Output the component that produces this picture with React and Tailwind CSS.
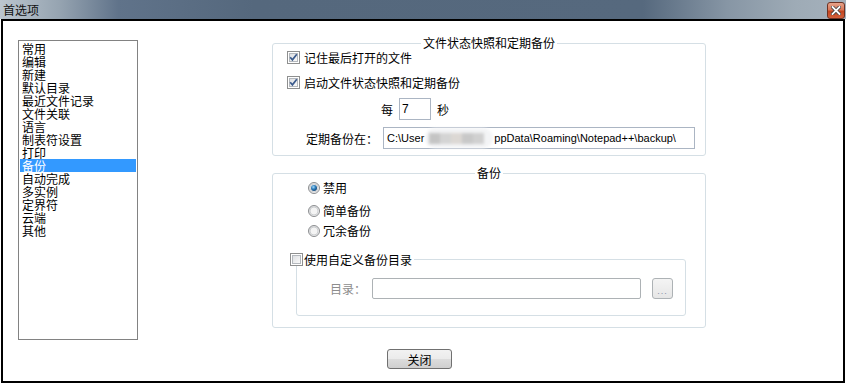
import React from "react";

const FONT = { fontFamily: '"Noto Sans CJK SC", "Noto Sans", sans-serif' };

function Checkbox({ checked }) {
  return (
    <svg width="13" height="13" viewBox="0 0 13 13" className="shrink-0">
      <defs>
        <linearGradient id={checked ? "cbg1" : "cbg0"} x1="0" y1="0" x2="1" y2="1">
          <stop offset="0" stopColor="#dcdee1" />
          <stop offset="1" stopColor="#fbfbfb" />
        </linearGradient>
      </defs>
      <rect x="0.5" y="0.5" width="12" height="12" fill="#fff" stroke="#8e8f8f" />
      <rect x="2.5" y="2.5" width="8" height="8" fill={`url(#${checked ? "cbg1" : "cbg0"})`} stroke="#b4b8bd" />
      {checked && (
        <path d="M3.2 6.3 L5.4 8.8 L9.8 3.2" fill="none" stroke="#3a5a8c" strokeWidth="1.7" />
      )}
    </svg>
  );
}

function Radio({ checked }) {
  return (
    <svg width="12" height="12" viewBox="0 0 12 12" className="shrink-0">
      <defs>
        <linearGradient id="rg" x1="0" y1="0" x2="1" y2="1">
          <stop offset="0" stopColor="#d6d8db" />
          <stop offset="1" stopColor="#fcfcfc" />
        </linearGradient>
        <radialGradient id="rdot" cx="0.4" cy="0.35" r="0.7">
          <stop offset="0" stopColor="#a6dcfb" />
          <stop offset="0.5" stopColor="#2f7dbb" />
          <stop offset="1" stopColor="#0f3f6e" />
        </radialGradient>
      </defs>
      <circle cx="6" cy="6" r="5.5" fill="url(#rg)" stroke="#8c8e90" />
      <circle cx="6" cy="6" r="4" fill="#f4f4f4" stroke="#c4c6c9" strokeWidth="0.8" />
      {checked && <circle cx="6" cy="6" r="3" fill="url(#rdot)" />}
    </svg>
  );
}

const items = [
  "常用",
  "编辑",
  "新建",
  "默认目录",
  "最近文件记录",
  "文件关联",
  "语言",
  "制表符设置",
  "打印",
  "备份",
  "自动完成",
  "多实例",
  "定界符",
  "云端",
  "其他",
];

export default function App() {
  return (
    <div className="w-[846px] h-[384px] bg-white overflow-hidden text-[12px] text-black" style={FONT}>
      {/* title bar */}
      <div className="h-[19px] flex items-center justify-between bg-[linear-gradient(to_right,#bcc6cf_0%,#96a4b1_7%,#60738a_14%,#55687d_30%,#56697e_76%,#8796a5_86%,#9eabb6_94%,#a5b1bc_100%)]">
        <span className="pl-[3px] leading-[13px] text-[12px] text-[#111]">首选项</span>
        <div className="mr-[1px] mt-[1px] w-[18px] h-[17px] rounded-[3px] border border-[#6e3324] bg-[linear-gradient(to_bottom,#e7a38a_0%,#d9785a_45%,#c4451f_55%,#d2603c_100%)] flex items-center justify-center">
          <svg width="10" height="9" viewBox="0 0 10 9">
            <path d="M1.5 1 L8.5 8 M8.5 1 L1.5 8" stroke="#3a3a3a" strokeWidth="3.4" strokeLinecap="square" />
            <path d="M1.5 1 L8.5 8 M8.5 1 L1.5 8" stroke="#ffffff" strokeWidth="1.8" strokeLinecap="square" />
          </svg>
        </div>
      </div>

      {/* body */}
      <div className="ml-[1px] w-[844px] h-[364px] border-2 border-black bg-white">
        <div className="flex items-start pl-[15px] pt-[19px]">
          {/* list */}
          <div className="w-[120px] h-[300px] border border-[#828282] p-[1px] shrink-0">
            {items.map((t) => (
              <div
                key={t}
                className={
                  "h-[13px] leading-[13px] pl-[2px] whitespace-nowrap " +
                  (t === "备份" ? "bg-[#3399ff] text-white" : "")
                }
              >
                {t}
              </div>
            ))}
          </div>

          {/* right column */}
          <div className="ml-[134px] mt-[3px] w-[434px] shrink-0">
            {/* group 1 */}
            <div className="relative h-[113px] border border-[#d5dfe5] rounded-[3px]">
              <div className="absolute top-[-8px] left-1/2 -translate-x-1/2 bg-white px-[2px] leading-[13px] whitespace-nowrap">
                文件状态快照和定期备份
              </div>
              <div className="mt-[7px] h-[13px] flex items-center pl-[14px] gap-[4px] leading-[13px]">
                <Checkbox checked />
                <span>记住最后打开的文件</span>
              </div>
              <div className="mt-[12px] h-[13px] flex items-center pl-[14px] gap-[4px] leading-[13px]">
                <Checkbox checked />
                <span>启动文件状态快照和定期备份</span>
              </div>
              <div className="mt-[9px] h-[22px] flex items-center pl-[108px]">
                <span className="leading-[13px]">每</span>
                <div
                  className="ml-[6px] w-[32px] h-[22px] border border-[#abb5c3] flex items-center pl-[2px] text-[12px]"
                  style={{ fontFamily: '"Liberation Sans", sans-serif' }}
                >
                  7
                </div>
                <span className="ml-[6px] leading-[13px]">秒</span>
              </div>
              <div className="mt-[7px] h-[22px] flex items-center pl-[33px]">
                <span className="leading-[13px] whitespace-nowrap">定期备份在：</span>
                <div
                  className="ml-[5px] w-[312px] h-[22px] border border-[#abb5c3] flex items-center pl-[3px] text-[11px] whitespace-nowrap"
                  style={{ fontFamily: '"Liberation Sans", sans-serif' }}
                >
                  <span>C:\User</span>
                  <span className="inline-flex items-center mx-[1px] h-[20px] w-[68px] rounded-full bg-[#f3f4f6] blur-[1.5px]">
                    <span className="w-[11px] h-[11px] bg-[#c4c4c4] ml-[4px]" />
                    <span className="w-[11px] h-[11px] bg-[#d4d4d4]" />
                    <span className="w-[11px] h-[11px] bg-[#dcd8d4]" />
                    <span className="w-[11px] h-[11px] bg-[#c8c8c8]" />
                    <span className="w-[11px] h-[11px] bg-[#d0d0d0]" />
                  </span>
                  <span>ppData\Roaming\Notepad++\backup\</span>
                </div>
              </div>
            </div>

            {/* group 2 */}
            <div className="relative mt-[17px] h-[155px] border border-[#d5dfe5] rounded-[3px]">
              <div className="absolute top-[-8px] left-1/2 -translate-x-1/2 bg-white px-[2px] leading-[13px] whitespace-nowrap">
                备份
              </div>
              <div className="mt-[7px] h-[13px] flex items-center pl-[35px] gap-[3px] leading-[13px]">
                <Radio checked />
                <span>禁用</span>
              </div>
              <div className="mt-[10px] h-[13px] flex items-center pl-[35px] gap-[3px] leading-[13px]">
                <Radio />
                <span>简单备份</span>
              </div>
              <div className="mt-[7px] h-[13px] flex items-center pl-[35px] gap-[3px] leading-[13px]">
                <Radio />
                <span>冗余备份</span>
              </div>

              {/* inner group */}
              <div className="relative ml-[23px] mt-[22px] w-[390px] h-[57px] border border-[#d5dfe5] rounded-[3px]">
                <div className="absolute top-[-7px] left-[-7px] bg-white pr-[2px] h-[13px] flex items-center gap-[1px] leading-[13px] whitespace-nowrap">
                  <Checkbox />
                  <span>使用自定义备份目录</span>
                </div>
                <div className="mt-[18px] h-[21px] flex items-center pl-[33px]">
                  <span className="leading-[13px] text-[#8d8d8d] whitespace-nowrap">目录：</span>
                  <div className="ml-[6px] w-[269px] h-[21px] border border-[#adb2b5] rounded-[2px] bg-white" />
                  <div className="ml-[11px] w-[21px] h-[21px] border border-[#adb2b5] rounded-[3px] bg-[linear-gradient(to_bottom,#f4f4f4,#e6e6e6)] flex items-end justify-center pb-[4px]">
                    <span className="text-[9px] leading-[6px] tracking-[1px] text-[#8a8fa8]" style={{ fontFamily: '"Liberation Sans", sans-serif' }}>...</span>
                  </div>
                </div>
              </div>
            </div>
          </div>
        </div>

        {/* close button */}
        <div className="pl-[384px] mt-[9px]">
          <div className="w-[65px] h-[20px] rounded-[3px] border border-[#707070] bg-[linear-gradient(to_bottom,#f2f2f2_0%,#ebebeb_50%,#dddddd_50%,#cfcfcf_100%)] flex items-center justify-center leading-[13px]">
            关闭
          </div>
        </div>
      </div>
    </div>
  );
}
